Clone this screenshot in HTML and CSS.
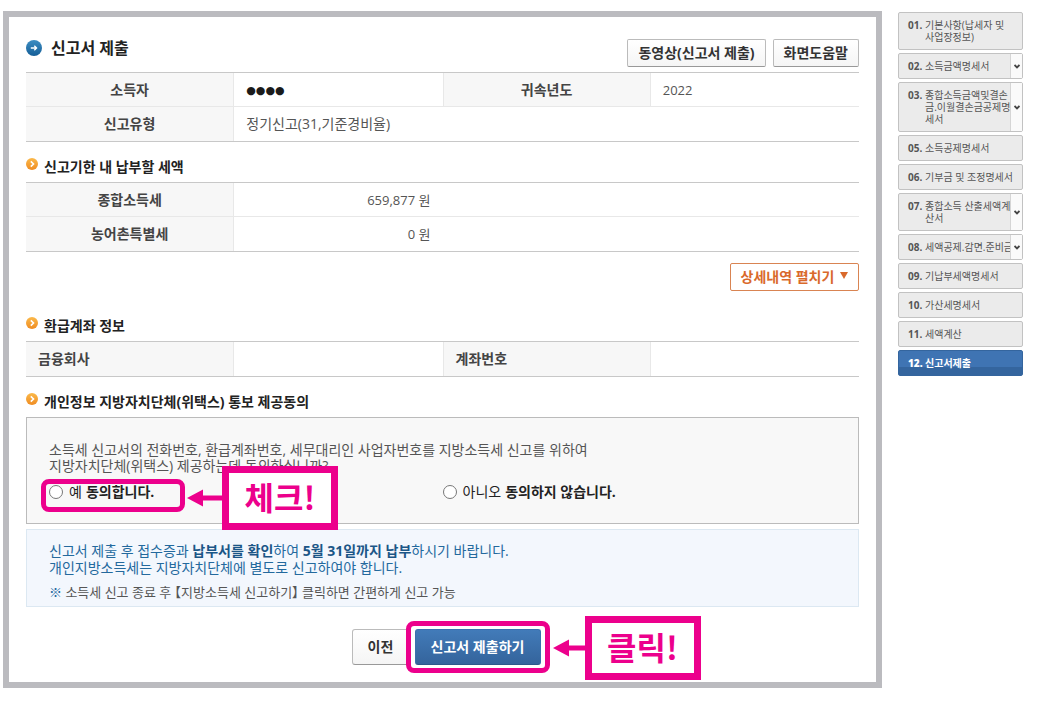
FILE: index.html
```html
<!DOCTYPE html>
<html lang="ko">
<head>
<meta charset="utf-8">
<meta name="viewport" content="width=device-width, initial-scale=1">
<title>신고서 제출</title>
<link rel="stylesheet" href="styles.css">
</head>
<body>
<svg class="defs" aria-hidden="true">
  <defs>
    <linearGradient id="blue" x1="0" y1="0" x2="0" y2="1"><stop offset="0" stop-color="#3d8dc2"/><stop offset="1" stop-color="#145e97"/></linearGradient>
    <linearGradient id="orange" x1="0" y1="0" x2="0" y2="1"><stop offset="0" stop-color="#fbb94a"/><stop offset="1" stop-color="#ef8c22"/></linearGradient>
    <symbol id="bullet" viewBox="0 0 12 12"><circle cx="6" cy="6" r="6" fill="url(#orange)"/><path d="M4.8 3.4 7.5 6 4.8 8.6" fill="none" stroke="#fff" stroke-width="1.6"/></symbol>
    <symbol id="chevron" viewBox="0 0 6 5"><path d="M.5 1 3 3.4 5.500 1" fill="none" stroke="#444" stroke-width="1.900"/></symbol>
    <symbol id="arrow" viewBox="0 0 36 18" preserveAspectRatio="xMinYMid slice"><path d="M0 9 16 0.5V6.500H36V11.500H16V17.500Z" fill="#ec008c"/></symbol>
  </defs>
</svg>
<div class="page">
  <main class="panel">
    <header class="head">
      <h1 class="title">
        <svg class="title-icon" viewBox="0 0 16 16" aria-hidden="true"><circle cx="8" cy="8" r="8" fill="url(#blue)"/><path d="M4.800 8H10.500M8.300 5.700 10.600 8 8.300 10.300" fill="none" stroke="#fff" stroke-width="1.300"/></svg>
        신고서 제출
      </h1>
      <div class="tools">
        <button class="btn" type="button">동영상(신고서 제출)</button>
        <button class="btn" type="button">화면도움말</button>
      </div>
    </header>

    <table class="grid">
      <tr><th scope="row">소득자</th><td><span class="mask">●●●●</span></td><th scope="row">귀속년도</th><td class="num">2022</td></tr>
      <tr><th scope="row">신고유형</th><td colspan="3">정기신고(31,기준경비율)</td></tr>
    </table>

    <h2 class="section"><svg class="bullet" aria-hidden="true"><use href="#bullet"/></svg>신고기한 내 납부할 세액</h2>
    <table class="grid">
      <tr><th scope="row">종합소득세</th><td class="num amount">659,877 원</td><td colspan="2"></td></tr>
      <tr><th scope="row">농어촌특별세</th><td class="num amount">0 원</td><td colspan="2"></td></tr>
    </table>
    <div class="more">
      <button class="btn btn-more" type="button">상세내역 펼치기 <svg class="tri" viewBox="0 0 8 7" aria-hidden="true"><path d="M0 0H8L4 7Z" fill="#d9692b"/></svg></button>
    </div>

    <h2 class="section"><svg class="bullet" aria-hidden="true"><use href="#bullet"/></svg>환급계좌 정보</h2>
    <table class="grid grid-left">
      <tr><th scope="row">금융회사</th><td></td><th scope="row">계좌번호</th><td></td></tr>
    </table>

    <h2 class="section"><svg class="bullet" aria-hidden="true"><use href="#bullet"/></svg>개인정보 지방자치단체(위택스) 통보 제공동의</h2>
    <section class="consent">
      <p>소득세 신고서의 전화번호, 환급계좌번호, 세무대리인 사업자번호를 지방소득세 신고를 위하여<br>지방자치단체(위택스) 제공하는데 동의하십니까?</p>
      <div class="choices">
        <div class="choice marked">
          <label for="yes"><input id="yes" type="radio" name="agree">예 <b>동의합니다.</b></label>
          <div class="tip tip-check"><svg class="arrow" aria-hidden="true"><use href="#arrow"/></svg><strong>체크!</strong></div>
        </div>
        <div class="choice">
          <label for="no"><input id="no" type="radio" name="agree">아니오 <b>동의하지 않습니다.</b></label>
        </div>
      </div>
    </section>

    <section class="notice">
      <p>신고서 제출 후 접수증과 <b>납부서를 확인</b>하여 <b>5월 31일까지 납부</b>하시기 바랍니다.<br>개인지방소득세는 지방자치단체에 별도로 신고하여야 합니다.</p>
      <p class="note"><span class="ref">※</span> 소득세 신고 종료 후 【지방소득세 신고하기】 클릭하면 간편하게 신고 가능</p>
    </section>

    <div class="actions">
      <button class="btn btn-prev" type="button">이전</button>
      <div class="submit-wrap">
        <button class="btn btn-submit" type="submit">신고서 제출하기</button>
        <div class="tip tip-click"><svg class="arrow" aria-hidden="true"><use href="#arrow"/></svg><strong>클릭!</strong></div>
      </div>
    </div>
  </main>

  <nav class="steps" aria-label="신고 단계">
    <div class="step"><a href="#"><b>01.</b><span>기본사항(납세자 및<br>사업장정보)</span></a></div>
    <div class="step"><a href="#"><b>02.</b><span>소득금액명세서</span></a><button type="button" aria-label="펼치기"><svg aria-hidden="true"><use href="#chevron"/></svg></button></div>
    <div class="step"><a href="#"><b>03.</b><span>종합소득금액및결손<br>금.이월결손금공제명<br>세서</span></a><button type="button" aria-label="펼치기"><svg aria-hidden="true"><use href="#chevron"/></svg></button></div>
    <div class="step"><a href="#"><b>05.</b><span>소득공제명세서</span></a></div>
    <div class="step"><a href="#"><b>06.</b><span>기부금 및 조정명세서</span></a></div>
    <div class="step"><a href="#"><b>07.</b><span>종합소득 산출세액계<br>산서</span></a><button type="button" aria-label="펼치기"><svg aria-hidden="true"><use href="#chevron"/></svg></button></div>
    <div class="step"><a href="#"><b>08.</b><span>세액공제.감면.준비금</span></a><button type="button" aria-label="펼치기"><svg aria-hidden="true"><use href="#chevron"/></svg></button></div>
    <div class="step"><a href="#"><b>09.</b><span>기납부세액명세서</span></a></div>
    <div class="step"><a href="#"><b>10.</b><span>가산세명세서</span></a></div>
    <div class="step"><a href="#"><b>11.</b><span>세액계산</span></a></div>
    <div class="step current"><a href="#" aria-current="step"><b>12.</b><span>신고서제출</span></a></div>
  </nav>
</div>
</body>
</html>
```
FILE: styles.css
```css
*, *::before { box-sizing: border-box; }

body {
  margin: 0;
  background: #fff;
  color: #555;
  font: 14px/16px "Open Sans", "Noto Sans CJK KR", sans-serif;
}

h1, h2, p { margin: 0; }
button { font: inherit; cursor: pointer; }

.defs { position: absolute; width: 0; height: 0; }

.page {
  display: flex;
  align-items: flex-start;
  gap: 16px;
  padding: 11px 15px 16px 3px;
}

.panel {
  flex: 1;
  min-width: 0;
  padding: 16px 17px 17px;
  border: 6px solid #bbbbbf;
}

.head {
  display: flex;
  justify-content: space-between;
  align-items: flex-end;
  margin-bottom: 5px;
}

.title {
  display: flex;
  align-items: center;
  gap: 9px;
  align-self: flex-start;
  height: 30px;
  margin-bottom: 4px;
  color: #222;
  font-size: 16px;
  font-weight: 700;
}

.title-icon { width: 16px; height: 16px; }

.tools { display: flex; gap: 7px; }

.btn {
  height: 28px;
  padding: 0 10px;
  border: 1px solid #bbb;
  border-bottom-color: #999;
  border-radius: 2px;
  background: linear-gradient(#fff, #f5f5f5);
  color: #333;
  font-weight: 700;
  white-space: nowrap;
}

.grid {
  width: 100%;
  table-layout: fixed;
  border-collapse: separate;
  border-spacing: 0;
  border-top: 1px solid #c8c8c8;
  border-bottom: 1px solid #c8c8c8;
}

.grid th, .grid td {
  height: 34px;
  padding: 0 12px;
  border-bottom: 1px solid #e8e8e8;
}

.grid tr:last-child > * { border-bottom: 0; }

.grid th {
  width: 25%;
  border-right: 1px solid #e8e8e8;
  background: #f7f7f7;
  color: #444;
  font-weight: 700;
}

.grid td + th { border-left: 1px solid #e8e8e8; }
.grid-left th { text-align: left; }
.grid .num { font-size: 13px; }
.grid .amount { text-align: right; }

.mask { color: #1a1a1a; font-family: "DejaVu Sans", sans-serif; font-size: 11px; }

.section {
  display: flex;
  gap: 6px;
  margin-top: 10px;
  color: #222;
  font-size: 14px;
  font-weight: 700;
  line-height: 30px;
}

.bullet { width: 12px; height: 12px; margin-top: 6px; }

.more {
  display: flex;
  justify-content: flex-end;
  margin: 11px 0 20px;
}

.btn-more {
  border-color: #d98452;
  background: #fff;
  color: #d9692b;
}

.btn-more .tri { width: 8px; height: 7px; margin: 0 0 3px 2px; }

.more + .section { margin-top: 0; }

.consent {
  padding: 24px 22px 21px;
  border: 1px solid #bbb;
  background: #f8f8f8;
}

.choices {
  display: flex;
  margin-top: 8px;
}

.choice { position: relative; flex: 1; color: #222; }

.choice label {
  display: flex;
  align-items: center;
  gap: 4px;
  height: 20px;
}

.choice input {
  appearance: none;
  width: 14px;
  height: 14px;
  margin: 0 2px 0 0;
  border: 1px solid #777;
  border-radius: 50%;
  background: #fff;
}

.choice input:checked { background: #3b73b5; box-shadow: inset 0 0 0 3px #fff; }

.marked::before, .submit-wrap::before {
  content: "";
  position: absolute;
  border: 5px solid #ec008c;
  border-radius: 8px;
  pointer-events: none;
}

.marked::before { left: -8px; top: -3px; width: 144px; height: 33px; }

.tip {
  position: absolute;
  display: flex;
  align-items: center;
}

.tip strong {
  width: 116px;
  padding-bottom: 4px;
  border: 7px solid #ec008c;
  background: #fff;
  color: #ec008c;
  font-family: "Noto Sans CJK KR", sans-serif;
  font-size: 32px;
  line-height: 46px;
  text-align: center;
}

.tip-check { left: 138px; top: -16px; }
.tip-check .arrow { width: 35px; height: 18px; }
.tip-click { left: 138px; top: -13px; }
.tip-click .arrow { width: 32px; height: 18px; }

.notice {
  margin-top: 5px;
  padding: 12px 22px 5px;
  border: 1px solid #dce8f2;
  background: #f3f7fd;
  color: #23699d;
  line-height: 17px;
}

.notice b { color: #1b5687; }

.notice .note {
  margin-top: 8px;
  color: #555;
  font-size: 13px;
  font-feature-settings: "halt";
}

.note .ref { color: #23699d; }

.actions {
  display: flex;
  justify-content: center;
  gap: 5px;
  margin-top: 22px;
  padding-left: 7px;
}

.actions .btn { height: 36px; border-radius: 3px; }

.actions .btn-prev { width: 58px; padding: 0; }

.submit-wrap { position: relative; }

.submit-wrap::before { inset: -8px -9px; }

.actions .btn-submit {
  width: 126px;
  padding: 0;
  border-color: #3a70ad #3a70ad #2c5789;
  background: linear-gradient(#427bb9, #34649c);
  color: #fff;
}

.steps {
  display: flex;
  flex: 0 0 125px;
  flex-direction: column;
  gap: 3px;
  min-width: 0;
  padding-top: 1px;
  font-size: 10px;
  line-height: 12px;
}

.step {
  display: flex;
  border: 1px solid #c2c2c2;
  border-radius: 2px;
  background: #ebebeb;
}

.step a {
  display: flex;
  flex: 1;
  min-width: 0;
  padding: 6px 0 6px 9px;
  overflow: hidden;
  color: #555;
  text-decoration: none;
  white-space: nowrap;
}

.step b { flex: 0 0 17px; }

.step button {
  display: grid;
  place-items: center;
  flex: 0 0 12px;
  padding: 0;
  border: 0;
  border-left: 1px solid #d5d5d5;
  background: #fafafa;
}

.step svg { width: 6px; height: 5px; }

.current { border-color: #34659e; background: linear-gradient(#3f74b3 65%, #34659e 65%); }
.current a { color: #fff; font-weight: 700; }
```
